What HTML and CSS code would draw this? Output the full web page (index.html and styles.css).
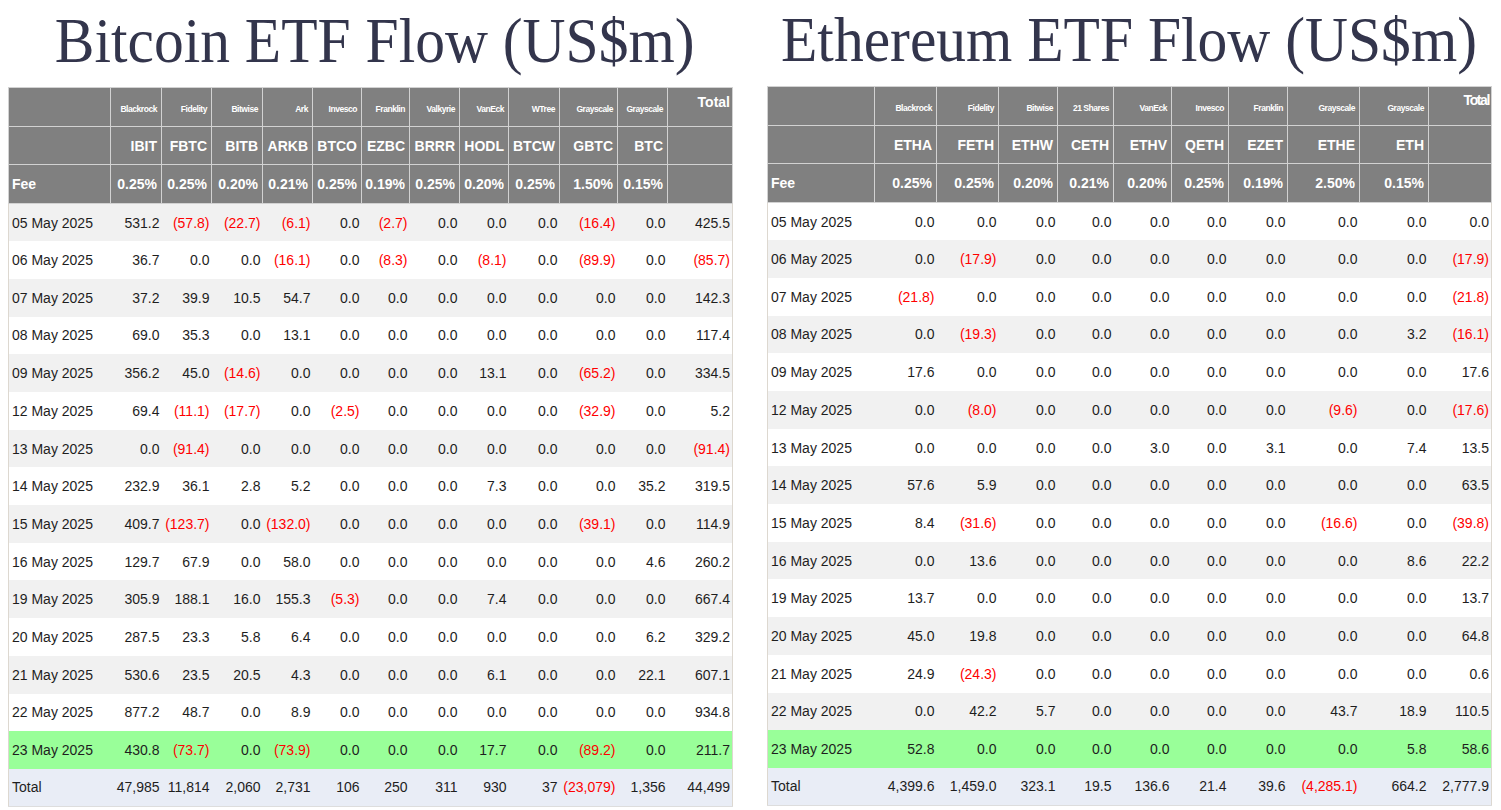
FILE: index.html
```html
<!DOCTYPE html>
<html>
<head>
<meta charset="utf-8">
<link rel="stylesheet" href="styles.css">
</head>
<body>
<div class="page">
  <section class="panel panel-btc">
    <h1 class="title title-btc">Bitcoin ETF Flow (US$m)</h1>
    <table class="flow">
      <colgroup>
        <col style="width:102px"><col style="width:51px"><col style="width:50px"><col style="width:51px"><col style="width:50px"><col style="width:49px"><col style="width:48px"><col style="width:50px"><col style="width:49px"><col style="width:51px"><col style="width:58px"><col style="width:50px"><col style="width:65px">
      </colgroup>
      <thead>
        <tr class="h1r"><th></th><th class="co">Blackrock</th><th class="co">Fidelity</th><th class="co">Bitwise</th><th class="co">Ark</th><th class="co">Invesco</th><th class="co">Franklin</th><th class="co">Valkyrie</th><th class="co">VanEck</th><th class="co">WTree</th><th class="co">Grayscale</th><th class="co">Grayscale</th><th class="tot">Total</th></tr>
        <tr class="h2r"><th></th><th>IBIT</th><th>FBTC</th><th>BITB</th><th>ARKB</th><th>BTCO</th><th>EZBC</th><th>BRRR</th><th>HODL</th><th>BTCW</th><th>GBTC</th><th>BTC</th><th></th></tr>
        <tr class="h3r"><th class="fee">Fee</th><th>0.25%</th><th>0.25%</th><th>0.20%</th><th>0.21%</th><th>0.25%</th><th>0.19%</th><th>0.25%</th><th>0.20%</th><th>0.25%</th><th>1.50%</th><th>0.15%</th><th></th></tr>
      </thead>
      <tbody>
        <tr class="g"><td>05 May 2025</td><td>531.2</td><td class="n">(57.8)</td><td class="n">(22.7)</td><td class="n">(6.1)</td><td>0.0</td><td class="n">(2.7)</td><td>0.0</td><td>0.0</td><td>0.0</td><td class="n">(16.4)</td><td>0.0</td><td>425.5</td></tr>
        <tr><td>06 May 2025</td><td>36.7</td><td>0.0</td><td>0.0</td><td class="n">(16.1)</td><td>0.0</td><td class="n">(8.3)</td><td>0.0</td><td class="n">(8.1)</td><td>0.0</td><td class="n">(89.9)</td><td>0.0</td><td class="n">(85.7)</td></tr>
        <tr class="g"><td>07 May 2025</td><td>37.2</td><td>39.9</td><td>10.5</td><td>54.7</td><td>0.0</td><td>0.0</td><td>0.0</td><td>0.0</td><td>0.0</td><td>0.0</td><td>0.0</td><td>142.3</td></tr>
        <tr><td>08 May 2025</td><td>69.0</td><td>35.3</td><td>0.0</td><td>13.1</td><td>0.0</td><td>0.0</td><td>0.0</td><td>0.0</td><td>0.0</td><td>0.0</td><td>0.0</td><td>117.4</td></tr>
        <tr class="g"><td>09 May 2025</td><td>356.2</td><td>45.0</td><td class="n">(14.6)</td><td>0.0</td><td>0.0</td><td>0.0</td><td>0.0</td><td>13.1</td><td>0.0</td><td class="n">(65.2)</td><td>0.0</td><td>334.5</td></tr>
        <tr><td>12 May 2025</td><td>69.4</td><td class="n">(11.1)</td><td class="n">(17.7)</td><td>0.0</td><td class="n">(2.5)</td><td>0.0</td><td>0.0</td><td>0.0</td><td>0.0</td><td class="n">(32.9)</td><td>0.0</td><td>5.2</td></tr>
        <tr class="g"><td>13 May 2025</td><td>0.0</td><td class="n">(91.4)</td><td>0.0</td><td>0.0</td><td>0.0</td><td>0.0</td><td>0.0</td><td>0.0</td><td>0.0</td><td>0.0</td><td>0.0</td><td class="n">(91.4)</td></tr>
        <tr><td>14 May 2025</td><td>232.9</td><td>36.1</td><td>2.8</td><td>5.2</td><td>0.0</td><td>0.0</td><td>0.0</td><td>7.3</td><td>0.0</td><td>0.0</td><td>35.2</td><td>319.5</td></tr>
        <tr class="g"><td>15 May 2025</td><td>409.7</td><td class="n">(123.7)</td><td>0.0</td><td class="n">(132.0)</td><td>0.0</td><td>0.0</td><td>0.0</td><td>0.0</td><td>0.0</td><td class="n">(39.1)</td><td>0.0</td><td>114.9</td></tr>
        <tr><td>16 May 2025</td><td>129.7</td><td>67.9</td><td>0.0</td><td>58.0</td><td>0.0</td><td>0.0</td><td>0.0</td><td>0.0</td><td>0.0</td><td>0.0</td><td>4.6</td><td>260.2</td></tr>
        <tr class="g"><td>19 May 2025</td><td>305.9</td><td>188.1</td><td>16.0</td><td>155.3</td><td class="n">(5.3)</td><td>0.0</td><td>0.0</td><td>7.4</td><td>0.0</td><td>0.0</td><td>0.0</td><td>667.4</td></tr>
        <tr><td>20 May 2025</td><td>287.5</td><td>23.3</td><td>5.8</td><td>6.4</td><td>0.0</td><td>0.0</td><td>0.0</td><td>0.0</td><td>0.0</td><td>0.0</td><td>6.2</td><td>329.2</td></tr>
        <tr class="g"><td>21 May 2025</td><td>530.6</td><td>23.5</td><td>20.5</td><td>4.3</td><td>0.0</td><td>0.0</td><td>0.0</td><td>6.1</td><td>0.0</td><td>0.0</td><td>22.1</td><td>607.1</td></tr>
        <tr><td>22 May 2025</td><td>877.2</td><td>48.7</td><td>0.0</td><td>8.9</td><td>0.0</td><td>0.0</td><td>0.0</td><td>0.0</td><td>0.0</td><td>0.0</td><td>0.0</td><td>934.8</td></tr>
        <tr class="latest"><td>23 May 2025</td><td>430.8</td><td class="n">(73.7)</td><td>0.0</td><td class="n">(73.9)</td><td>0.0</td><td>0.0</td><td>0.0</td><td>17.7</td><td>0.0</td><td class="n">(89.2)</td><td>0.0</td><td>211.7</td></tr>
        <tr class="total"><td>Total</td><td>47,985</td><td>11,814</td><td>2,060</td><td>2,731</td><td>106</td><td>250</td><td>311</td><td>930</td><td>37</td><td class="n">(23,079)</td><td>1,356</td><td>44,499</td></tr>
      </tbody>
    </table>
  </section>

  <section class="panel panel-eth">
    <h1 class="title title-eth">Ethereum ETF Flow (US$m)</h1>
    <table class="flow">
      <colgroup>
        <col style="width:107px"><col style="width:62px"><col style="width:62px"><col style="width:59px"><col style="width:56px"><col style="width:58px"><col style="width:57px"><col style="width:59px"><col style="width:72px"><col style="width:69px"><col style="width:63px">
      </colgroup>
      <thead>
        <tr class="h1r"><th></th><th class="co">Blackrock</th><th class="co">Fidelity</th><th class="co">Bitwise</th><th class="co">21 Shares</th><th class="co">VanEck</th><th class="co">Invesco</th><th class="co">Franklin</th><th class="co">Grayscale</th><th class="co">Grayscale</th><th class="tot tot-eth">Total</th></tr>
        <tr class="h2r"><th></th><th>ETHA</th><th>FETH</th><th>ETHW</th><th>CETH</th><th>ETHV</th><th>QETH</th><th>EZET</th><th>ETHE</th><th>ETH</th><th></th></tr>
        <tr class="h3r"><th class="fee">Fee</th><th>0.25%</th><th>0.25%</th><th>0.20%</th><th>0.21%</th><th>0.20%</th><th>0.25%</th><th>0.19%</th><th>2.50%</th><th>0.15%</th><th></th></tr>
      </thead>
      <tbody>
        <tr><td>05 May 2025</td><td>0.0</td><td>0.0</td><td>0.0</td><td>0.0</td><td>0.0</td><td>0.0</td><td>0.0</td><td>0.0</td><td>0.0</td><td>0.0</td></tr>
        <tr class="g"><td>06 May 2025</td><td>0.0</td><td class="n">(17.9)</td><td>0.0</td><td>0.0</td><td>0.0</td><td>0.0</td><td>0.0</td><td>0.0</td><td>0.0</td><td class="n">(17.9)</td></tr>
        <tr><td>07 May 2025</td><td class="n">(21.8)</td><td>0.0</td><td>0.0</td><td>0.0</td><td>0.0</td><td>0.0</td><td>0.0</td><td>0.0</td><td>0.0</td><td class="n">(21.8)</td></tr>
        <tr class="g"><td>08 May 2025</td><td>0.0</td><td class="n">(19.3)</td><td>0.0</td><td>0.0</td><td>0.0</td><td>0.0</td><td>0.0</td><td>0.0</td><td>3.2</td><td class="n">(16.1)</td></tr>
        <tr><td>09 May 2025</td><td>17.6</td><td>0.0</td><td>0.0</td><td>0.0</td><td>0.0</td><td>0.0</td><td>0.0</td><td>0.0</td><td>0.0</td><td>17.6</td></tr>
        <tr class="g"><td>12 May 2025</td><td>0.0</td><td class="n">(8.0)</td><td>0.0</td><td>0.0</td><td>0.0</td><td>0.0</td><td>0.0</td><td class="n">(9.6)</td><td>0.0</td><td class="n">(17.6)</td></tr>
        <tr><td>13 May 2025</td><td>0.0</td><td>0.0</td><td>0.0</td><td>0.0</td><td>3.0</td><td>0.0</td><td>3.1</td><td>0.0</td><td>7.4</td><td>13.5</td></tr>
        <tr class="g"><td>14 May 2025</td><td>57.6</td><td>5.9</td><td>0.0</td><td>0.0</td><td>0.0</td><td>0.0</td><td>0.0</td><td>0.0</td><td>0.0</td><td>63.5</td></tr>
        <tr><td>15 May 2025</td><td>8.4</td><td class="n">(31.6)</td><td>0.0</td><td>0.0</td><td>0.0</td><td>0.0</td><td>0.0</td><td class="n">(16.6)</td><td>0.0</td><td class="n">(39.8)</td></tr>
        <tr class="g"><td>16 May 2025</td><td>0.0</td><td>13.6</td><td>0.0</td><td>0.0</td><td>0.0</td><td>0.0</td><td>0.0</td><td>0.0</td><td>8.6</td><td>22.2</td></tr>
        <tr><td>19 May 2025</td><td>13.7</td><td>0.0</td><td>0.0</td><td>0.0</td><td>0.0</td><td>0.0</td><td>0.0</td><td>0.0</td><td>0.0</td><td>13.7</td></tr>
        <tr class="g"><td>20 May 2025</td><td>45.0</td><td>19.8</td><td>0.0</td><td>0.0</td><td>0.0</td><td>0.0</td><td>0.0</td><td>0.0</td><td>0.0</td><td>64.8</td></tr>
        <tr><td>21 May 2025</td><td>24.9</td><td class="n">(24.3)</td><td>0.0</td><td>0.0</td><td>0.0</td><td>0.0</td><td>0.0</td><td>0.0</td><td>0.0</td><td>0.6</td></tr>
        <tr class="g"><td>22 May 2025</td><td>0.0</td><td>42.2</td><td>5.7</td><td>0.0</td><td>0.0</td><td>0.0</td><td>0.0</td><td>43.7</td><td>18.9</td><td>110.5</td></tr>
        <tr class="latest"><td>23 May 2025</td><td>52.8</td><td>0.0</td><td>0.0</td><td>0.0</td><td>0.0</td><td>0.0</td><td>0.0</td><td>0.0</td><td>5.8</td><td>58.6</td></tr>
        <tr class="total"><td>Total</td><td>4,399.6</td><td>1,459.0</td><td>323.1</td><td>19.5</td><td>136.6</td><td>21.4</td><td>39.6</td><td class="n">(4,285.1)</td><td>664.2</td><td>2,777.9</td></tr>
      </tbody>
    </table>
  </section>
</div>
</body>
</html>
```

FILE: styles.css
```css
html, body {
  margin: 0;
  padding: 0;
  background: #ffffff;
}

.page {
  display: flex;
  gap: 35px;
  padding: 0 10px 0 8px;
  width: 1501px;
  box-sizing: border-box;
}

.panel {
  width: 724px;
  display: flex;
  flex-direction: column;
}

.title {
  margin: 0;
  height: 87px;
  box-sizing: border-box;
  display: flex;
  justify-content: center;
  font-family: "Liberation Serif", "Times New Roman", serif;
  font-weight: normal;
  font-size: 64px;
  line-height: 82px;
  color: #33354c;
  white-space: nowrap;
  transform: scaleX(0.93);
}

.title-btc {
  padding-left: 10px;
}

.title-eth {
  height: 86px;
  line-height: 79px;
}

.flow {
  width: 724px;
  table-layout: fixed;
  border-collapse: collapse;
  font-family: "Liberation Sans", Arial, sans-serif;
  font-size: 14px;
  color: #1e1e1e;
  border-left: 1px solid #ddd8d0;
  border-right: 1px solid #ddd8d0;
  border-bottom: 1px solid #dddddd;
}

.flow thead th {
  background: #808080;
  color: #ffffff;
  font-weight: bold;
  text-align: right;
  padding: 0 4px 0 2px;
  border: 1px solid #d2d2d2;
  white-space: nowrap;
  overflow: hidden;
}

.flow thead tr {
  height: 38.7px;
}

.flow thead th.co {
  font-size: 8.5px;
  letter-spacing: -0.45px;
  padding-top: 5px;
}

.flow thead th.tot {
  font-size: 14px;
  vertical-align: top;
  padding-top: 6px;
  padding-right: 2px;
}

.flow thead th.tot-eth {
  letter-spacing: -1.4px;
  padding-top: 5px;
}

.flow thead th.fee {
  text-align: left;
  padding-left: 3px;
}

.flow tbody tr {
  height: 37.7px;
  background: #ffffff;
}

.flow tbody tr.g {
  background: #f1f1f1;
}

.flow tbody tr.latest {
  background: #99ff99;
}

.flow tbody tr.total {
  background: #e9edf6;
}

.flow tbody td {
  text-align: right;
  padding: 0 2px;
  white-space: nowrap;
  overflow: hidden;
}

.flow tbody td:first-child {
  text-align: left;
  padding-left: 3px;
}

.flow tbody td.n {
  color: #ff0000;
}
```
